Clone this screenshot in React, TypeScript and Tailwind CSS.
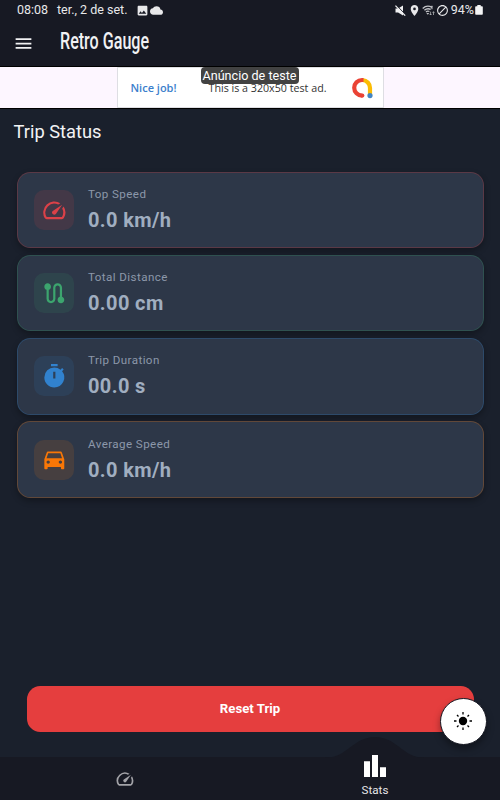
import type { ReactNode } from "react";
import {
  MdBlock,
  MdCloud,
  MdDirectionsCar,
  MdImage,
  MdLocationOn,
  MdMenu,
  MdRoute,
  MdSpeed,
  MdTimer,
} from "react-icons/md";
import clsx from "clsx";

const STATS = [
  {
    label: "Top Speed",
    value: "0.0 km/h",
    icon: MdSpeed,
    border: "border-[#e53e3e]/25",
    tile: "bg-[#e53e3e]/12 text-[#dc4148]",
  },
  {
    label: "Total Distance",
    value: "0.00 cm",
    icon: MdRoute,
    border: "border-[#38a169]/25",
    tile: "bg-[#38a169]/12 text-[#3ca56e]",
  },
  {
    label: "Trip Duration",
    value: "00.0 s",
    icon: MdTimer,
    border: "border-[#3182ce]/25",
    tile: "bg-[#3182ce]/12 text-[#3182ce]",
  },
  {
    label: "Average Speed",
    value: "0.0 km/h",
    icon: MdDirectionsCar,
    border: "border-[#ff7a0a]/25",
    tile: "bg-[#ff7a0a]/12 text-[#f97706]",
  },
];

function MuteIcon() {
  return (
    <svg viewBox="0 0 11 11" className="h-[11px] w-[11px]" fill="#f0f0f2">
      <path d="M.5 3.4h2.6L8 .4v10.2L3.1 7.6H.5z" />
      <path d="M1.2 0 11 10" stroke="#171923" strokeWidth="1" />
      <path d="M.4.6 10.2 10.6" stroke="#f0f0f2" strokeWidth="1.3" />
    </svg>
  );
}

function WifiIcon() {
  return (
    <svg viewBox="0 0 13 11" className="h-[11px] w-[13px]" fill="none" stroke="#c4c5c9">
      <path d="M.7 3.4C3.5.8 7 .7 10 2.3M2.4 5.2c2-1.7 4.2-1.9 6.3-.8M4 6.9c1.1-.9 2.3-1 3.4-.4" strokeWidth="1.4" />
      <path d="M4.3 8 5.8 9.7 7.3 8z" fill="#c4c5c9" stroke="none" />
      <path d="M9.9 1v3.4M10.8 1.3H9M10.8 3H9.3M8.6 6.7v3.2M7.7 9l.9 1 .9-1M11.5 10V6.8m-.9.9.9-1 .9 1" strokeWidth=".7" />
    </svg>
  );
}

function StatusBar() {
  return (
    <div className="flex h-5 items-center justify-between px-[17px] text-[12.5px] leading-5 text-[#e8e8ea]">
      <div className="flex items-center">
        <span className="w-[40px]">08:08</span>
        <span className="w-[79px] whitespace-nowrap">ter., 2 de set.</span>
        <MdImage className="size-[13px]" />
        <MdCloud className="ml-px size-[13px]" />
      </div>
      <div className="flex items-center">
        <MuteIcon />
        <MdLocationOn className="mr-px ml-[2px] size-[13px]" />
        <WifiIcon />
        <MdBlock className="mr-[2px] ml-px size-[13px]" />
        <span>94%</span>
        <svg viewBox="0 0 8 10" className="ml-px h-[10px] w-2" fill="#f4f4f5">
          <path d="M2.3 0h3.4v1.2H7a.8.8 0 0 1 .8.8v7a.8.8 0 0 1-.8.8H1a.8.8 0 0 1-.8-.8V2A.8.8 0 0 1 1 1.2h1.3z" />
        </svg>
      </div>
    </div>
  );
}

function AdMobLogo() {
  return (
    <svg viewBox="0 0 22 22" className="size-[22px]" fill="none" strokeWidth="4.2">
      <path d="M11.5 3A8 8 0 0 1 19 11v7" stroke="#fbbc04" />
      <path d="M12.5 3H11a7.7 7.7 0 0 0 0 15.6h.2" stroke="#ea4335" />
      <circle cx="11.3" cy="18.6" r="2.1" fill="#ea4335" />
      <circle cx="19" cy="18.6" r="2.6" fill="#4285c4" />
    </svg>
  );
}

function AdBanner() {
  return (
    <div className="flex h-[43px] justify-center border-y border-black bg-[#fdf6ff]">
      <div className="relative flex w-[267px] items-center border border-[#dedee3] bg-white font-['Open_Sans',sans-serif]">
        <span className="mt-px ml-[13px] w-[78px] text-[11px] font-semibold text-[#3c7fcc]">Nice job!</span>
        <span className="mt-[2px] w-[142px] text-[10.7px] whitespace-nowrap text-[#333]">
          This is a 320x50 test ad.
        </span>
        <AdMobLogo />
        <span className="absolute -top-px left-[83px] flex h-[17px] w-[98px] items-center justify-center rounded-[4px] bg-[#424242] pt-px font-['Roboto',sans-serif] text-[12.6px] whitespace-nowrap text-white">
          Anúncio de teste
        </span>
      </div>
    </div>
  );
}

function StatCard({ stat }: { stat: (typeof STATS)[number] }) {
  const Icon = stat.icon;
  return (
    <div
      className={clsx(
        "flex h-[76.6px] items-center rounded-[13.3px] border bg-[#2d3748] pl-[16.5px] shadow-[0_3px_6px_rgba(0,0,0,0.3)]",
        stat.border
      )}
    >
      <div className={clsx("flex size-10 items-center justify-center rounded-[10px]", stat.tile)}>
        <Icon className="size-[26.6px]" />
      </div>
      <div className="ml-[14px] flex flex-col">
        <span className="-mt-[2px] text-[11.6px] leading-[16px] tracking-[0.42px] text-[#8c98aa]">{stat.label}</span>
        <span className="mt-[6px] text-[20px] leading-[24px] font-bold tracking-[0.38px] text-[#a0aec0]">
          {stat.value}
        </span>
      </div>
    </div>
  );
}

function SunIcon() {
  return (
    <svg viewBox="0 0 20 20" className="size-5" stroke="#000" strokeWidth="1.3">
      <circle cx="10" cy="10" r="4.2" stroke="none" />
      <path d="M10 1v2.5M10 16.5V19M1 10h2.5M16.5 10H19M4 4l1.5 1.5M14.5 14.5 16 16M4 16l1.5-1.5M14.5 5.5 16 4" />
    </svg>
  );
}

function BarsIcon() {
  return (
    <svg viewBox="0 0 22 22" className="size-[22px]" fill="#fff">
      <path d="M0 6.3h6V22H0zM8 0h6v22H8zM16 12.3h6V22h-6z" />
    </svg>
  );
}

function NavItem({ children }: { children: ReactNode }) {
  return <div className="relative flex flex-1 flex-col items-center">{children}</div>;
}

export default function App() {
  return (
    <div className="relative flex h-[800px] w-[500px] flex-col overflow-hidden bg-[#1a202c] font-['Roboto',sans-serif]">
      <header className="h-[66px] bg-[#171923]">
        <StatusBar />
        <div className="flex h-[46px] items-center pl-[13px] text-[#f1f1f3]">
          <MdMenu className="size-[21px]" />
          <h1 className="-mt-[2px] ml-[26px] origin-left scale-x-[0.7] text-[23px] leading-[44px] font-medium whitespace-nowrap">
            Retro Gauge
          </h1>
        </div>
      </header>
      <AdBanner />

      <main className="flex flex-1 flex-col px-[16.5px]">
        <h2 className="-ml-[3px] pt-[9.5px] text-[18.3px] leading-[26px] text-[#f2f3f5]">Trip Status</h2>
        <div className="mt-[27px] flex flex-col gap-[6.7px]">
          {STATS.map((stat) => (
            <StatCard key={stat.label} stat={stat} />
          ))}
        </div>
        <button className="mx-[10px] mt-auto mb-[25px] h-[46px] rounded-[13.3px] bg-[#e53e3e] text-[13.2px] font-bold text-white">
          Reset Trip
        </button>
      </main>

      <nav className="flex h-[43px] bg-[#171923]">
        <NavItem>
          <MdSpeed className="mt-[12px] size-5 text-[#a3a3a8]" />
        </NavItem>
        <NavItem>
          <svg viewBox="0 0 100 21" className="absolute -top-5 h-[21px] w-[100px]" fill="#171923">
            <path d="M0 21C22 21 28 0 50 0s28 21 50 21z" />
          </svg>
          <div className="relative -mt-[2px]">
            <BarsIcon />
          </div>
          <span className="relative mt-[6px] text-[11.6px] leading-[14px] text-[#e6e6e8]">Stats</span>
        </NavItem>
      </nav>

      <button
        aria-label="Toggle theme"
        className="absolute top-[698px] left-[440px] flex size-[46.5px] items-center justify-center rounded-full border border-[#171923] bg-white shadow-[0_4px_7px_rgba(0,0,0,0.35)]"
      >
        <SunIcon />
      </button>
    </div>
  );
}
